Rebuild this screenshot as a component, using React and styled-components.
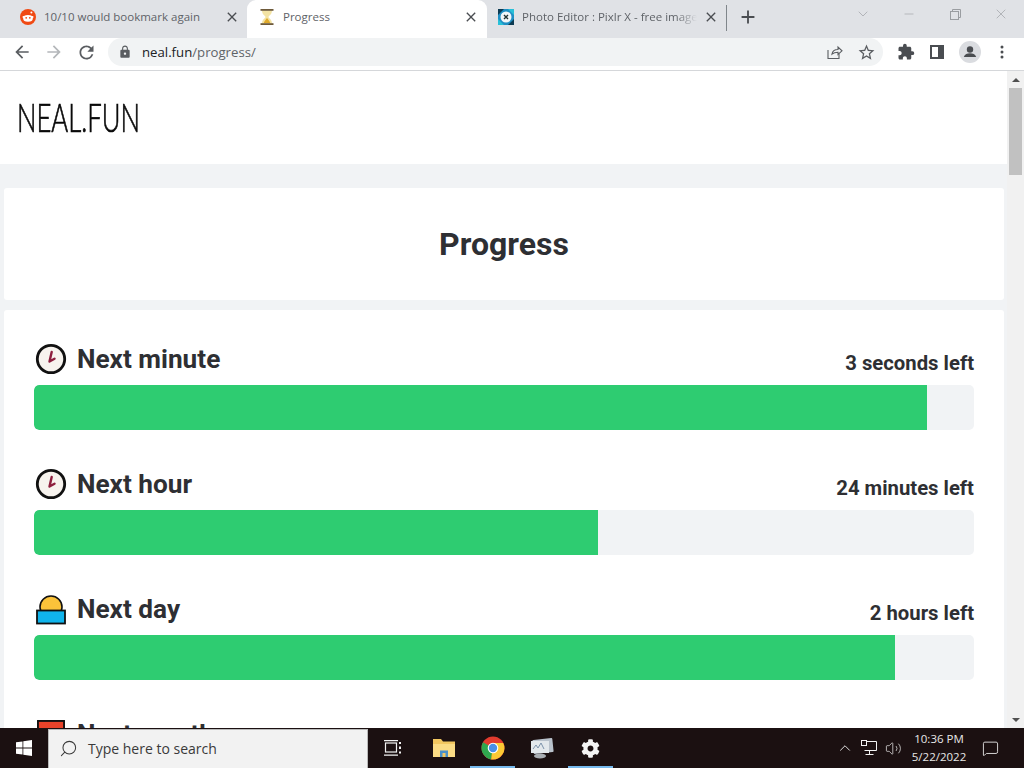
import React from 'react'
import styled, { createGlobalStyle } from 'styled-components'
import { MdArrowBack, MdArrowForward, MdRefresh, MdLock, MdStarBorder, MdExtension, MdClose, MdAdd } from 'react-icons/md'
import { FaCog } from 'react-icons/fa'
import { ChevronDown, Minus, X, Search, ChevronUp, Volume2, MessageSquare } from 'lucide-react'

const Global = createGlobalStyle`
html, body { margin: 0; padding: 0; height: 768px; overflow: hidden; background: #fff; }
* { box-sizing: border-box; }
`

const Screen = styled.div`
width: 1024px;
height: 768px;
display: flex;
flex-direction: column;
overflow: hidden;
font-family: "Open Sans", "Liberation Sans", sans-serif;
`

const TabStrip = styled.div`
height: 38px;
flex: none;
display: flex;
background: #e0e2e6;
`

const Tab = styled.div`
width: ${p => p.$width}px;
flex: none;
height: 38px;
display: flex;
align-items: center;
padding-left: ${p => p.$pad}px;
padding-right: ${p => p.$padRight}px;
padding-bottom: 5px;
border-radius: 9px 9px 0 0;
background: ${p => p.$active ? '#fff' : 'transparent'};
`

const TabTitle = styled.span`
flex: 1;
margin-left: 8px;
margin-right: 6px;
font-size: 11.5px;
color: #5f6368;
white-space: nowrap;
overflow: hidden;
mask-image: ${p => p.$fade ? 'linear-gradient(to right, #000 88%, transparent 100%)' : 'none'};
`

const TabClose = styled(MdClose)`
flex: none;
width: 16px;
height: 16px;
color: #4a4d51;
`

const Divider = styled.div`
width: 1px;
height: 26px;
margin: 5px 0 0 4px;
background: #80868b;
`

const NewTab = styled(MdAdd)`
width: 22px;
height: 22px;
margin: 6px 0 0 10px;
color: #4a4d51;
`

const WindowButtons = styled.div`
margin-left: auto;
display: flex;
color: #9a9da1;
padding-top: 6px;
`

const WindowButton = styled.div`
width: 46px;
height: 16px;
display: flex;
align-items: center;
justify-content: center;
`

const Toolbar = styled.div`
height: 33px;
flex: none;
display: flex;
align-items: center;
background: #fff;
border-bottom: 1px solid #d5d7da;
padding: 0 0 4px 12px;
`

const NavIcon = styled.div`
width: 32px;
display: flex;
color: ${p => p.$off ? '#b4b7ba' : '#5a5d61'};
`

const Omnibox = styled.div`
width: 775px;
height: 28px;
margin-left: 0;
border-radius: 14px;
background: #f1f3f4;
display: flex;
align-items: center;
padding: 0 7px 0 10px;
`

const Url = styled.span`
margin-left: 10px;
font-size: 13.2px;
color: #5f6368;
flex: 1;
`

const Host = styled.span`
color: #202124;
`

const ToolIcons = styled.div`
display: flex;
align-items: center;
color: #5a5d61;
gap: ${p => p.$gap}px;
margin-left: ${p => p.$left || 0}px;
`

const Viewport = styled.div`
flex: 1;
min-height: 0;
display: flex;
overflow: hidden;
background: #f1f3f5;
`

const Page = styled.div`
width: 1007px;
flex: none;
height: 100%;
overflow: hidden;
`

const Scrollbar = styled.div`
flex: 1;
background: #f1f1f1;
display: flex;
flex-direction: column;
align-items: center;
`

const ScrollArrow = styled.div`
height: 17px;
width: 100%;
flex: none;
display: flex;
align-items: center;
justify-content: center;
margin-top: ${p => p.$end ? 'auto' : 0};
&::before {
  content: '';
  border-left: 4px solid transparent;
  border-right: 4px solid transparent;
  ${p => p.$end ? 'border-top: 4px solid #505050;' : 'border-bottom: 4px solid #505050;'}
}
`

const Thumb = styled.div`
width: 13px;
height: 87px;
background: #c1c1c1;
`

const SiteHeader = styled.header`
height: 93px;
background: #fff;
padding: 26px 0 0 17px;
`

const Logo = styled.div`
font-family: "Lato", sans-serif;
font-weight: 300;
font-size: 39px;
line-height: 40px;
color: #0a0a0a;
transform-origin: left top;
transform: scaleX(0.66);
white-space: nowrap;
-webkit-text-stroke: 0.7px #0a0a0a;
`

const Content = styled.main`
padding: 24px 3px 0 4px;
display: flex;
flex-direction: column;
gap: 10px;
`

const TitleCard = styled.section`
height: 112px;
background: #fff;
border-radius: 3px;
display: flex;
align-items: center;
justify-content: center;
`

const Heading = styled.h1`
margin: 0;
font-family: Roboto, sans-serif;
font-weight: 700;
font-size: 32px;
color: #2e2f33;
`

const ListCard = styled.section`
background: #fff;
border-radius: 3px;
padding: 30px 30px 10px;
display: flex;
flex-direction: column;
gap: 35px;
`

const Row = styled.div`
display: flex;
flex-direction: column;
`

const RowHead = styled.div`
height: 45px;
display: flex;
align-items: flex-start;
justify-content: space-between;
font-family: Roboto, sans-serif;
font-weight: 700;
color: #2e2f33;
`

const RowTitle = styled.div`
display: flex;
align-items: center;
gap: 10px;
font-size: 26.2px;
line-height: 38px;
padding-left: 1px;
`

const TimeLeft = styled.div`
font-size: 20.3px;
line-height: 24px;
margin-top: 11px;
`

const Bar = styled.div`
height: 45px;
border-radius: 5px;
background: #f1f3f5;
overflow: hidden;
`

const Fill = styled.div`
height: 100%;
background: #2ecc71;
border-radius: 5px 0 0 5px;
`

const Taskbar = styled.footer`
height: 40px;
flex: none;
display: flex;
align-items: center;
background: #1b1011;
color: #f4f4f4;
`

const StartButton = styled.div`
width: 48px;
display: flex;
justify-content: center;
`

const SearchBox = styled.div`
width: 320px;
height: 39px;
margin-top: 1px;
background: #f2f2f2;
border: 1px solid #b9b9b9;
border-bottom: none;
display: flex;
align-items: center;
padding: 0 0 2px 10px;
gap: 10px;
color: #3a3a3a;
font-size: 14px;
`

const SearchGlass = styled(Search)`
transform: scaleX(-1);
`

const TaskItem = styled.div`
width: ${p => p.$w}px;
height: 40px;
flex: none;
display: flex;
align-items: center;
justify-content: center;
padding-top: 2px;
border-bottom: 2px solid ${p => p.$open ? '#76b9ed' : 'transparent'};
`

const Tray = styled.div`
margin-left: auto;
display: flex;
align-items: center;
padding-right: 25px;
`

const TrayIcon = styled.div`
width: 24px;
display: flex;
justify-content: center;
`

const Clock = styled.div`
width: 58px;
margin: 0 14px 0 5px;
text-align: center;
font-size: 11.5px;
line-height: 18px;
color: #e8e8e8;
`

const RedditIcon = () => (
    <svg width="16" height="16" viewBox="0 0 16 16">
        <circle cx="8" cy="8" r="8" fill="#f04a14" />
        <ellipse cx="8" cy="9.4" rx="4.8" ry="3.3" fill="#fff" />
        <circle cx="3.6" cy="8" r="1.1" fill="#fff" />
        <circle cx="12.4" cy="8" r="1.1" fill="#fff" />
        <circle cx="11.4" cy="3.6" r="1" fill="#fff" />
        <circle cx="6.2" cy="8.8" r=".9" fill="#f04a14" />
        <circle cx="9.8" cy="8.8" r=".9" fill="#f04a14" />
    </svg>
)

const HourglassIcon = () => (
    <svg width="16" height="18" viewBox="0 0 16 18">
        <path d="M3 2.500h10c0 4-3 5-3.600 6.500.6 1.500 3.600 2.500 3.600 6.500H3c0-4 3-5 3.600-6.500C6 7.500 3 6.500 3 2.500z" fill="#f3e3a4" />
        <path d="M4.800 15c.5-2.500 2.400-3.500 3.200-5 .8 1.500 2.700 2.500 3.200 5z" fill="#e0a92a" />
        <rect x="1.500" y="1" width="13" height="1.800" fill="#6e5a3a" />
        <rect x="1.500" y="15.200" width="13" height="1.800" fill="#6e5a3a" />
    </svg>
)

const PixlrIcon = () => (
    <svg width="16" height="16" viewBox="0 0 16 16">
        <rect width="16" height="16" fill="#1f8fc4" />
        <path d="M0 0h6L0 6zM16 16h-6l6-6z" fill="#0c3a52" />
        <path d="M16 0v6l-6-6zM0 16v-6l6 6z" fill="#28c0d8" />
        <circle cx="8" cy="8" r="5.500" fill="#f2f6f8" />
        <path d="M6 6l4 4M10 6l-4 4" stroke="#233" strokeWidth="1.400" />
    </svg>
)

const ShareIcon = () => (
    <svg width="16" height="16" viewBox="0 0 16 16" fill="none" stroke="currentColor" strokeWidth="1.100">
        <path d="M1 6v8.500h11V10" />
        <path d="M5 10c.5-3 3-4.500 6-4.500V3l4 3.800-4 3.700V8.200c-2.500 0-4.500.5-6 1.800z" />
    </svg>
)

const SidePanelIcon = () => (
    <svg width="14" height="14" viewBox="0 0 14 14">
        <rect x="1" y="1" width="12" height="12" fill="none" stroke="#4a4d51" strokeWidth="2" />
        <rect x="8" y="1" width="5" height="12" fill="#4a4d51" />
    </svg>
)

const AvatarIcon = () => (
    <svg width="22" height="22" viewBox="0 0 22 22">
        <circle cx="11" cy="11" r="11" fill="#dadce0" />
        <circle cx="11" cy="8.500" r="3.200" fill="#4a4d51" />
        <path d="M4.800 16c.8-2.800 3.500-3.800 6.200-3.800s5.400 1 6.200 3.800z" fill="#4a4d51" />
    </svg>
)

const MenuDots = () => (
    <svg width="4" height="14" viewBox="0 0 4 14" fill="#4a4d51">
        <circle cx="2" cy="2" r="1.500" />
        <circle cx="2" cy="7" r="1.500" />
        <circle cx="2" cy="12" r="1.500" />
    </svg>
)

const RestoreIcon = () => (
    <svg width="11" height="11" viewBox="0 0 11 11" fill="none" stroke="currentColor">
        <rect x=".5" y="2.500" width="8" height="8" />
        <path d="M2.500 2.500v-2h8v8h-2" />
    </svg>
)

const ClockEmoji = () => (
    <svg width="32" height="32" viewBox="0 0 32 32">
        <circle cx="16" cy="16" r="13.700" fill="#f7f3ee" stroke="#111" strokeWidth="2.800" />
        <path d="M14.500 18.500l2.200-9.500M14.500 18.500l5-2.800" stroke="#8e1f3e" strokeWidth="2.400" strokeLinecap="round" />
    </svg>
)

const SunriseEmoji = () => (
    <svg width="32" height="32" viewBox="0 0 32 32">
        <circle cx="16" cy="14" r="11" fill="#fbc33a" stroke="#111" strokeWidth="1.600" />
        <rect x="2" y="17.500" width="28" height="13" fill="#10b4ec" stroke="#111" strokeWidth="1.800" />
    </svg>
)

const CalendarEmoji = () => (
    <svg width="32" height="32" viewBox="0 0 32 32">
        <rect x="3" y="3" width="26" height="27" fill="#fff" stroke="#111" strokeWidth="1.800" />
        <rect x="3" y="3" width="26" height="12" fill="#e8432a" stroke="#111" strokeWidth="1.800" />
    </svg>
)

const WindowsLogo = () => (
    <svg width="16" height="16" viewBox="0 0 16 16" fill="#fff">
        <path d="M0 2.300l6.500-.9v6.200H0zM7.300 1.300L16 0v7.600H7.300zM0 8.400h6.500v6.200L0 13.700zM7.300 8.400H16V16l-8.700-1.300z" />
    </svg>
)

const TaskViewIcon = () => (
    <svg width="18" height="16" viewBox="0 0 18 16" fill="none" stroke="#f2f2f2" strokeWidth="1.200">
        <rect x="1.500" y="3" width="11" height="9" />
        <path d="M0 .6h14M0 15.200h14" />
        <path d="M16 2v2M16 6.500v2.500M16 11.500v2" strokeWidth="2" />
    </svg>
)

const FolderIcon = () => (
    <svg width="24" height="20" viewBox="0 0 24 20">
        <path d="M1 1h8l2 2.500h12V19H1z" fill="#f2c760" />
        <rect x="1" y="6" width="22" height="13" fill="#fbdc85" />
        <rect x="8" y="12.500" width="8" height="6.500" fill="#4a90c8" />
        <rect x="10.500" y="15" width="3" height="4" fill="#f2c760" />
    </svg>
)

const ChromeLogo = () => (
    <svg width="24" height="24" viewBox="0 0 24 24">
        <circle cx="12" cy="12" r="11.500" fill="#e33b2e" />
        <path d="M12 12L2 6.300A11.500 11.500 0 0 0 10.200 23.400z" fill="#2fa84f" />
        <path d="M12 7h10.200a11.500 11.500 0 0 1-12 16.400z" fill="#fcc934" />
        <circle cx="12" cy="12" r="5.300" fill="#fff" />
        <circle cx="12" cy="12" r="4.200" fill="#4a8fe7" />
    </svg>
)

const MonitorApp = () => (
    <svg width="24" height="24" viewBox="0 0 24 24">
        <rect x="3" y="3" width="20" height="14" rx="1" fill="#b9c2cc" transform="rotate(-6 13 10)" />
        <rect x="1" y="5" width="18" height="12" fill="#e3e8ec" />
        <path d="M3 13l3-4 2 3 3-5 3 6" fill="none" stroke="#7d93ab" />
        <ellipse cx="10" cy="20" rx="6" ry="2.500" fill="#a9aeb3" />
    </svg>
)

const NetworkIcon = () => (
    <svg width="16" height="16" viewBox="0 0 16 16" fill="none" stroke="#f2f2f2">
        <path d="M3.500 1.500h12v9h-12" />
        <rect x=".5" y=".5" width="5" height="5" fill="#1b1011" />
        <path d="M8.500 10.500v3.500M4.500 14.500h8" />
    </svg>
)

const rows = [
    { name: 'Next minute', left: '3 seconds left', fill: 95, icon: <ClockEmoji /> },
    { name: 'Next hour', left: '24 minutes left', fill: 60, icon: <ClockEmoji /> },
    { name: 'Next day', left: '2 hours left', fill: 91.6, icon: <SunriseEmoji /> },
    { name: 'Next month', left: '9 days left', fill: 70, icon: <CalendarEmoji /> },
]

const App = () => {
    return (
        <Screen>
            <Global />
            <TabStrip>
                <Tab $width={247} $pad={20} $padRight={7}>
                    <RedditIcon />
                    <TabTitle>10/10 would bookmark again</TabTitle>
                    <TabClose />
                </Tab>
                <Tab $width={240} $active $pad={12} $padRight={8}>
                    <HourglassIcon />
                    <TabTitle>Progress</TabTitle>
                    <TabClose />
                </Tab>
                <Tab $width={235} $pad={11} $padRight={3}>
                    <PixlrIcon />
                    <TabTitle $fade>Photo Editor : Pixlr X - free image</TabTitle>
                    <TabClose />
                </Tab>
                <Divider />
                <NewTab />
                <WindowButtons>
                    <WindowButton><ChevronDown size={16} strokeWidth={1} /></WindowButton>
                    <WindowButton><Minus size={14} strokeWidth={1} /></WindowButton>
                    <WindowButton><RestoreIcon /></WindowButton>
                    <WindowButton><X size={16} strokeWidth={1} /></WindowButton>
                </WindowButtons>
            </TabStrip>
            <Toolbar>
                <NavIcon><MdArrowBack size={20} /></NavIcon>
                <NavIcon $off><MdArrowForward size={20} /></NavIcon>
                <NavIcon><MdRefresh size={21} /></NavIcon>
                <Omnibox>
                    <MdLock size={14} color="#5a5d61" />
                    <Url><Host>neal.fun</Host>/progress/</Url>
                    <ToolIcons $gap={14}>
                        <ShareIcon />
                        <MdStarBorder size={19} />
                    </ToolIcons>
                </Omnibox>
                <ToolIcons $gap={15} $left={14}>
                    <MdExtension size={18} color="#4a4d51" />
                    <SidePanelIcon />
                    <AvatarIcon />
                </ToolIcons>
                <ToolIcons $left={19}>
                    <MenuDots />
                </ToolIcons>
            </Toolbar>
            <Viewport>
                <Page>
                    <SiteHeader>
                        <Logo>NEAL.FUN</Logo>
                    </SiteHeader>
                    <Content>
                        <TitleCard>
                            <Heading>Progress</Heading>
                        </TitleCard>
                        <ListCard>
                            {rows.map(r => (
                                <Row key={r.name}>
                                    <RowHead>
                                        <RowTitle>{r.icon}{r.name}</RowTitle>
                                        <TimeLeft>{r.left}</TimeLeft>
                                    </RowHead>
                                    <Bar>
                                        <Fill style={{ width: r.fill + '%' }} />
                                    </Bar>
                                </Row>
                            ))}
                        </ListCard>
                    </Content>
                </Page>
                <Scrollbar>
                    <ScrollArrow />
                    <Thumb />
                    <ScrollArrow $end />
                </Scrollbar>
            </Viewport>
            <Taskbar>
                <StartButton><WindowsLogo /></StartButton>
                <SearchBox>
                    <SearchGlass size={19} strokeWidth={1.3} />
                    Type here to search
                </SearchBox>
                <TaskItem $w={49}><TaskViewIcon /></TaskItem>
                <TaskItem $w={53}><FolderIcon /></TaskItem>
                <TaskItem $w={45} $open><ChromeLogo /></TaskItem>
                <TaskItem $w={53}><MonitorApp /></TaskItem>
                <TaskItem $w={45} $open><FaCog size={19} /></TaskItem>
                <Tray>
                    <TrayIcon><ChevronUp size={18} strokeWidth={1.2} /></TrayIcon>
                    <TrayIcon><NetworkIcon /></TrayIcon>
                    <TrayIcon><Volume2 size={17} strokeWidth={1} /></TrayIcon>
                    <Clock>10:36 PM<br />5/22/2022</Clock>
                    <MessageSquare size={17} strokeWidth={1.2} />
                </Tray>
            </Taskbar>
        </Screen>
    )
}

export default App
